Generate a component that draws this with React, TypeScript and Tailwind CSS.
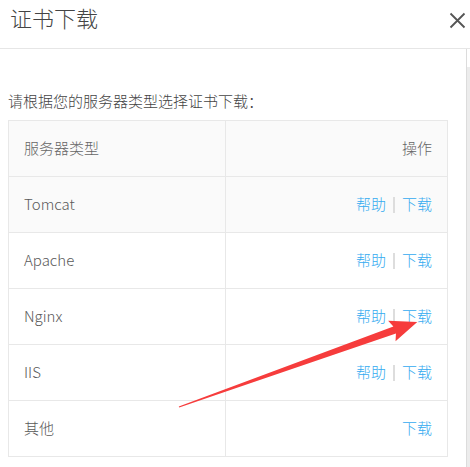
const rows = [
  { name: 'Tomcat', help: true, shaded: true },
  { name: 'Apache', help: true },
  { name: 'Nginx', help: true },
  { name: 'IIS', help: true },
  { name: '其他', help: false },
]

function CloseIcon() {
  return (
    <svg width="17" height="17" viewBox="0 0 17 17" aria-hidden="true">
      <path d="M1.5 1.5 L15.5 15.5 M15.5 1.5 L1.5 15.5" stroke="#555" strokeWidth="1.8" fill="none" />
    </svg>
  )
}

function Arrow() {
  const len = 253
  return (
    <svg className="pointer-events-none absolute left-0 top-0" width="470" height="467" aria-hidden="true">
      <g transform="translate(179 407) rotate(-19.65)">
        <polygon
          fill="#f63c3c"
          points={`0,-0.6 ${len - 24},-3.8 ${len - 27},-11 ${len},0 ${len - 27},11 ${len - 24},3.8 0,0.6`}
        />
      </g>
    </svg>
  )
}

export default function App() {
  return (
    <div className="relative flex h-[467px] w-[470px] flex-col overflow-hidden bg-white font-['Noto_Sans_CJK_SC',sans-serif] font-light">
      <div className="flex h-[49px] shrink-0 items-start justify-between border-b border-[#e6e6e6] pl-[10px] pr-[4px]">
        <h1 className="text-[22px] leading-[34px] font-light text-[#444]">证书下载</h1>
        <div className="mt-[12px]">
          <CloseIcon />
        </div>
      </div>

      <div className="flex min-h-0 flex-1">
        <div className="flex-1 pl-[8px] pr-[18px] pt-[42px]">
          <p className="mb-[9px] text-[15px] leading-[20px] text-[#444]">请根据您的服务器类型选择证书下载：</p>

          <div className="border-x border-t border-[#e8e8e8] text-[15px] text-[#5a5a5a]">
            <div className="flex h-[56px] border-b border-[#e8e8e8] bg-[#fafafa]">
              <div className="flex w-[217px] items-center border-r border-[#e8e8e8] pl-[15px] text-[#666]">服务器类型</div>
              <div className="flex flex-1 items-center justify-end pr-[15px] text-[#666]">操作</div>
            </div>
            {rows.map((row) => (
              <div
                key={row.name}
                className={`flex h-[56px] border-b border-[#e8e8e8] ${row.shaded ? 'bg-[#fafafa]' : 'bg-white'}`}
              >
                <div className="flex w-[217px] items-center border-r border-[#e8e8e8] pl-[15px]">{row.name}</div>
                <div className="flex flex-1 items-center justify-end pr-[15px] text-[#33aaf0]">
                  {row.help && (
                    <>
                      <span>帮助</span>
                      <span className="mx-[7px] h-[16px] w-[2px] bg-[#dddddd]" />
                    </>
                  )}
                  <span>下载</span>
                </div>
              </div>
            ))}
          </div>
        </div>

        <div className="w-[4px] shrink-0 border-l border-[#dcdcdc] pt-[18px]">
          <div className="h-full bg-[#ececec]" />
        </div>
      </div>

      <Arrow />
    </div>
  )
}
